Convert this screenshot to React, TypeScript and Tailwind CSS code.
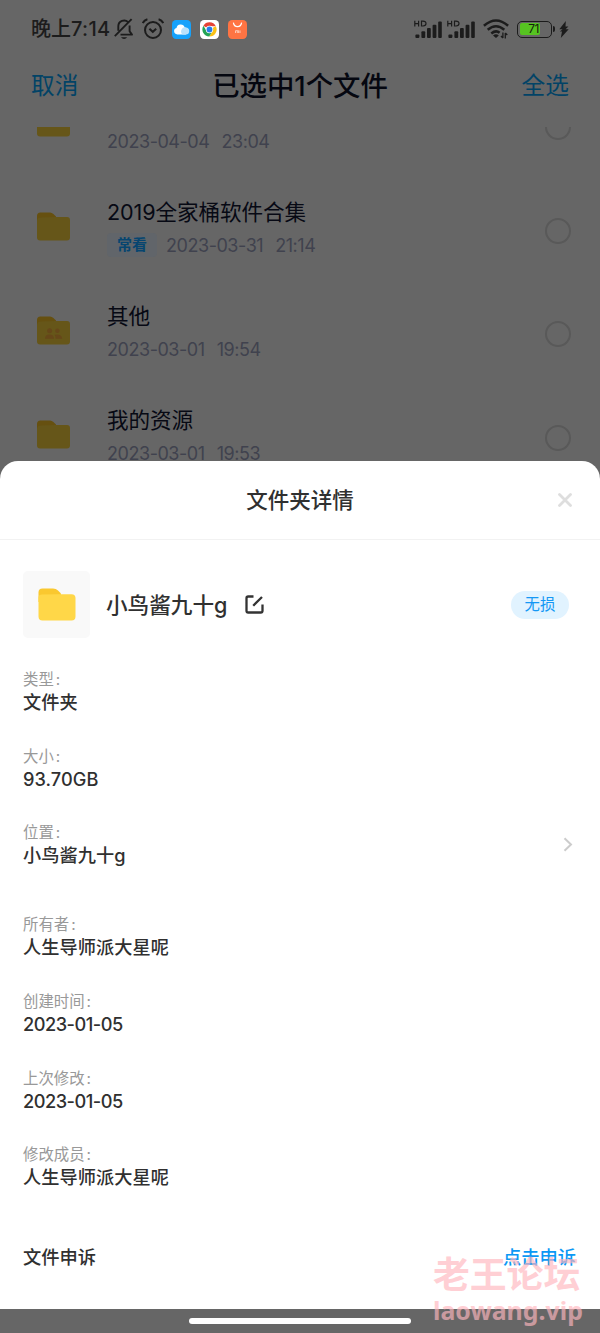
import React from "react";

const FONT = "font-['Inter','Noto_Sans_CJK_SC',sans-serif]";

function Folder({ shared = false }: { shared?: boolean }) {
  return (
    <svg width="33" height="29" viewBox="0 0 33 29" className="block">
      <path d="M0 4Q0 .5 3.5.5H13Q15 .5 16.4 2L19 4.6V12H0Z" fill="#665010" />
      <path d="M0 9Q0 6 3 5.5L18 5Q19 5 20 5H30Q33 5 33 8V25.3Q33 28.5 29.8 28.5H3.2Q0 28.5 0 25.3Z" fill="#665619" />
      {shared && (
        <g fill="#664719">
          <circle cx="12.6" cy="14.8" r="2.5" />
          <circle cx="20.4" cy="14.8" r="2.2" />
          <path d="M8 22.8Q8 18.5 12.5 18.5T17 22.8Z M18.5 22.8Q18.6 20.3 17.6 18.8Q24.5 17.7 25.2 22.8Z" />
        </g>
      )}
    </svg>
  );
}

function Row({ title, date, time, tag, shared }: { title: string; date: string; time: string; tag?: string; shared?: boolean }) {
  return (
    <div className="flex h-[103.8px] shrink-0 items-center pl-[37px] pr-[29px]">
      <div className="mb-[7px] w-[70px]"><Folder shared={shared} /></div>
      <div className="flex-1 pb-[2.5px]">
        <div className="h-[33px] text-[21.6px] leading-[32px] tracking-[-0.1px] text-[#070914]">{title}</div>
        <div className="flex h-[33px] items-center text-[18px] leading-[33px] text-[#40424e]">
          {tag && (
            <span className="mr-[9px] flex h-[24px] w-[50px] items-center justify-center rounded-[4px] bg-[#61656a] text-[15px] font-bold leading-[24px] text-[#064570]">{tag}</span>
          )}
          <span className="tracking-[-0.45px]">{date}</span>
          <span className="ml-[12px] tracking-[-0.45px]">{time}</span>
        </div>
      </div>
      <div className="mt-[1px] h-[26px] w-[26px] rounded-full border-2 border-[#595959]" />
    </div>
  );
}

function Field({ label, value }: { label: string; value: string }) {
  const isDate = /^\d{4}-/.test(value);
  return (
    <div className="h-[76.7px]">
      <div className="h-[22px] text-[15.4px] leading-[23px] text-[#999]">{label}<span className="ml-[2px]">:</span></div>
      <div className={`h-[25px] text-[18.2px] font-medium leading-[25px] text-[#303030] ${isDate ? "tracking-[-0.5px]" : "tracking-[0.05px]"}`}>{value}</div>
    </div>
  );
}

function Signal() {
  return (
    <svg width="28" height="19" viewBox="0 0 28 19" fill="#1c1c1c">
      <path d="M.8.8V6.4M.8 3.6H4.6M4.6.8V6.4M7.5 1.2V6H9Q12 6 12 3.6T9 1.2Z" fill="none" stroke="#1c1c1c" strokeWidth="1.2" />
      <rect x="1.4" y="14.5" width="4" height="3.5" rx="1" />
      <rect x="7.4" y="11.3" width="3.8" height="6.7" rx="1" />
      <rect x="13" y="8" width="3.8" height="10" rx="1" />
      <rect x="18.6" y="4.8" width="3.8" height="13.2" rx="1" />
      <rect x="24.2" y="1.4" width="3.6" height="16.6" rx="1" />
    </svg>
  );
}

function StatusBar() {
  return (
    <div className="flex h-[58px] shrink-0 items-center pl-[31px] pr-[31px] text-[#1c1c1c]">
      <div className="w-[83px] whitespace-nowrap text-[20px] font-medium leading-[30px]">晚上<span className="tracking-[0.3px]">7:14</span></div>
      <svg width="20" height="22" viewBox="0 0 20 22" fill="none" stroke="#1c1c1c" strokeWidth="1.9" strokeLinejoin="round">
        <path d="M14.2 4.2A5.8 5.8 0 0 0 4.3 8.2V12.7M15.6 7.5V13.2L18 16.6H6.5M.8 18.2L17.6 1.2" />
        <path d="M7 19.3H13.2Q12 21.1 10.1 21.1T7 19.3Z" fill="#1c1c1c" stroke="none" />
      </svg>
      <svg width="22" height="22" viewBox="0 0 22 22" fill="none" stroke="#1c1c1c" strokeWidth="2" className="ml-[8px]">
        <circle cx="11" cy="12" r="8" />
        <path d="M.8 5Q2.2 2 5.4 1.2M21.2 5Q19.8 2 16.6 1.2M7.4 10.7L10.8 13.8L14.2 10.7" />
      </svg>
      <svg width="19" height="19" viewBox="0 0 19 19" className="ml-[8px]">
        <rect width="19" height="19" rx="4.2" fill="#17a2fb" />
        <path d="M5.3 14.4A3.2 3.2 0 0 1 4.5 8.1A4.2 4.2 0 0 1 12.7 7.4A3.6 3.6 0 0 1 13.7 14.4Z" fill="#fff" />
        <path d="M10.5 14.4A4 4 0 0 1 13.7 7.4A3.5 3.5 0 0 1 13.7 14.4Z" fill="#b9e1fb" />
      </svg>
      <svg width="19" height="19" viewBox="0 0 19 19" className="ml-[9px]">
        <rect width="19" height="19" rx="4.2" fill="#fff" />
        <path d="M9.5 9.5L3.4 5.8A7.1 7.1 0 0 1 15.8 6.2H9.5Z" fill="#e64235" />
        <path d="M9.5 9.5L15.8 6.2A7.1 7.1 0 0 1 9.2 16.6L12.4 11.2Z" fill="#fbc116" />
        <path d="M9.5 9.5L12.4 11.2L9.2 16.6A7.1 7.1 0 0 1 3.4 5.8L6.7 11.2Z" fill="#23a456" />
        <circle cx="9.5" cy="9.5" r="3.7" fill="#fff" />
        <circle cx="9.5" cy="9.5" r="2.9" fill="#287de9" />
      </svg>
      <svg width="19" height="19" viewBox="0 0 19 19" className="ml-[9px]">
        <rect width="19" height="19" rx="4.2" fill="#ff7443" />
        <path d="M5.4 2.6Q6 6.6 9.5 6.6T13.6 2.6" fill="none" stroke="#fff" strokeWidth="1.2" />
        <path d="M7.5 13V10.7H9.3V13M9.3 10.7H10.6V13M12 10.4V13" fill="none" stroke="#ffd1c0" strokeWidth=".9" />
      </svg>
      <div className="ml-auto flex items-center">
        <Signal />
        <span className="w-[5px]" />
        <Signal />
        <svg width="26" height="20" viewBox="0 0 26 20" fill="none" stroke="#1c1c1c" strokeWidth="2.5" className="ml-[8px]">
          <path d="M.9 6.8Q13 -3.8 25.1 6.8M4.7 10.8Q13 3.7 21.3 10.8M8.3 14.5Q13 10.6 16.6 13.8" />
          <path d="M10 16.4Q13 14 15.8 16.4L13 19Z" fill="#1c1c1c" stroke="none" />
          <path d="M19.9 13.4V19M19.9 19L18 17M22.3 19.5V14M22.3 14L24.3 16" strokeWidth="1.3" />
        </svg>
        <div className="ml-[8px] flex h-[17px] w-[35px] items-center rounded-[5px] border-[1.6px] border-[#1c1c1c] p-[2px]">
          <div className="flex h-[11.5px] w-[20px] items-center justify-end rounded-[2px] bg-[#56c421] pr-[0.5px] text-[12px] leading-[12px] tracking-[-0.5px] text-[#12200c]">71</div>
        </div>
        <div className="ml-[1.5px] h-[6px] w-[2px] rounded-r bg-[#1c1c1c]" />
        <svg width="10" height="17" viewBox="0 0 10 17" className="ml-[4px]"><path d="M6.8 0L.3 8.2H3.6L.9 10.6H3L1.8 17L9.7 8.3H6.6L9.4 5.6H6.5Z" fill="#1c1c1c" /></svg>
      </div>
    </div>
  );
}

export default function App() {
  return (
    <div className={`relative flex h-[1333px] w-[600px] flex-col overflow-hidden bg-[#666] ${FONT}`}>
      <StatusBar />
      <div className="flex h-[68.5px] shrink-0 items-start justify-between px-[31px] pt-[8px] leading-[40px]">
        <span className="text-[23.7px] text-[#024366]">取消</span>
        <span className="text-[27.4px] font-medium text-[#050710]">已选中1个文件</span>
        <span className="text-[23.7px] text-[#024366]">全选</span>
      </div>
      <div className="flex h-[334.5px] shrink-0 flex-col overflow-hidden">
        <div className="-mt-[52px] shrink-0"><Row title="" date="2023-04-04" time="23:04" /></div>
        <Row title="2019全家桶软件合集" date="2023-03-31" time="21:14" tag="常看" />
        <Row title="其他" date="2023-03-01" time="19:54" shared />
        <Row title="我的资源" date="2023-03-01" time="19:53" />
      </div>
      <div className="flex h-[848px] shrink-0 flex-col rounded-t-[18px] bg-white">
        <div className="flex h-[79px] shrink-0 items-center border-b border-[#f2f2f2]">
          <span className="w-[42px]" />
          <span className="flex-1 text-center text-[21.5px] font-medium leading-[32px] text-[#303030]">文件夹详情</span>
          <svg width="14" height="14" viewBox="0 0 14 14" className="mr-[28px]"><path d="M1.5 1.5L12.5 12.5M12.5 1.5L1.5 12.5" stroke="#dedede" strokeWidth="2.8" strokeLinecap="round" /></svg>
        </div>
        <div className="mt-[31px] flex h-[67px] shrink-0 items-center pl-[23px] pr-[31px]">
          <div className="flex h-[67px] w-[67px] items-center justify-center rounded-[5px] bg-[#f9f9f9]">
            <svg width="38" height="33" viewBox="0 0 38 33">
              <path d="M.5 4.5Q.5.5 4.5.5H15Q18 .5 20 2.5L23 5.5V14H.5Z" fill="#fac82f" />
              <path d="M.5 10Q.5 6.6 4 6.6L20 6.2H33.5Q37.5 6.2 37.5 10V28.5Q37.5 32.5 33.5 32.5H4.5Q.5 32.5 .5 28.5Z" fill="#ffd748" />
            </svg>
          </div>
          <span className="ml-[16px] text-[21.6px] font-medium leading-[32px] text-[#303030]">小鸟酱九十g</span>
          <svg width="19" height="19" viewBox="0 0 19 19" fill="none" stroke="#333" strokeWidth="2.3" strokeLinejoin="round" className="ml-[18px]">
            <path d="M8.5 1.5H3.2Q1.5 1.5 1.5 3.2V15.8Q1.5 17.5 3.2 17.5H15.8Q17.5 17.5 17.5 15.8V9.5M8.2 10.8L17 2" />
          </svg>
          <span className="ml-auto flex h-[28px] w-[58px] items-center justify-center rounded-full bg-[#e1f3ff] text-[15.4px] leading-[28px] text-[#1598f5]">无损</span>
        </div>
        <div className="mt-[30px] shrink-0 px-[23px]">
          <Field label="类型" value="文件夹" />
          <Field label="大小" value="93.70GB" />
          <div className="flex h-[92px] justify-between">
            <Field label="位置" value="小鸟酱九十g" />
            <svg width="10" height="15" viewBox="0 0 10 15" className="mt-[16px] mr-[4px]" fill="none" stroke="#ccc" strokeWidth="2"><path d="M1.5 1.2L8 7.5L1.5 13.8" /></svg>
          </div>
          <Field label="所有者" value="人生导师派大星呢" />
          <Field label="创建时间" value="2023-01-05" />
          <Field label="上次修改" value="2023-01-05" />
          <Field label="修改成员" value="人生导师派大星呢" />
          <div className="mt-[24px] flex justify-between text-[18.3px] font-medium leading-[26px]">
            <span className="text-[#303030]">文件申诉</span>
            <span className="mr-[1px] text-[#0b98f5]">点击申诉</span>
          </div>
        </div>
      </div>
      <div className="flex h-[24px] shrink-0 items-center justify-center">
        <div className="h-[6px] w-[222px] rounded-full bg-white" />
      </div>
      <div className="absolute left-[433px] top-[1252px] w-[160px] whitespace-nowrap font-['Noto_Sans','Noto_Sans_CJK_SC',sans-serif] font-bold text-[#ffb6be] opacity-65">
        <div className="text-[36.8px] leading-[44px]">老王论坛</div>
        <div className="text-[24.9px] leading-[28px]">laowang.vip</div>
      </div>
    </div>
  );
}
